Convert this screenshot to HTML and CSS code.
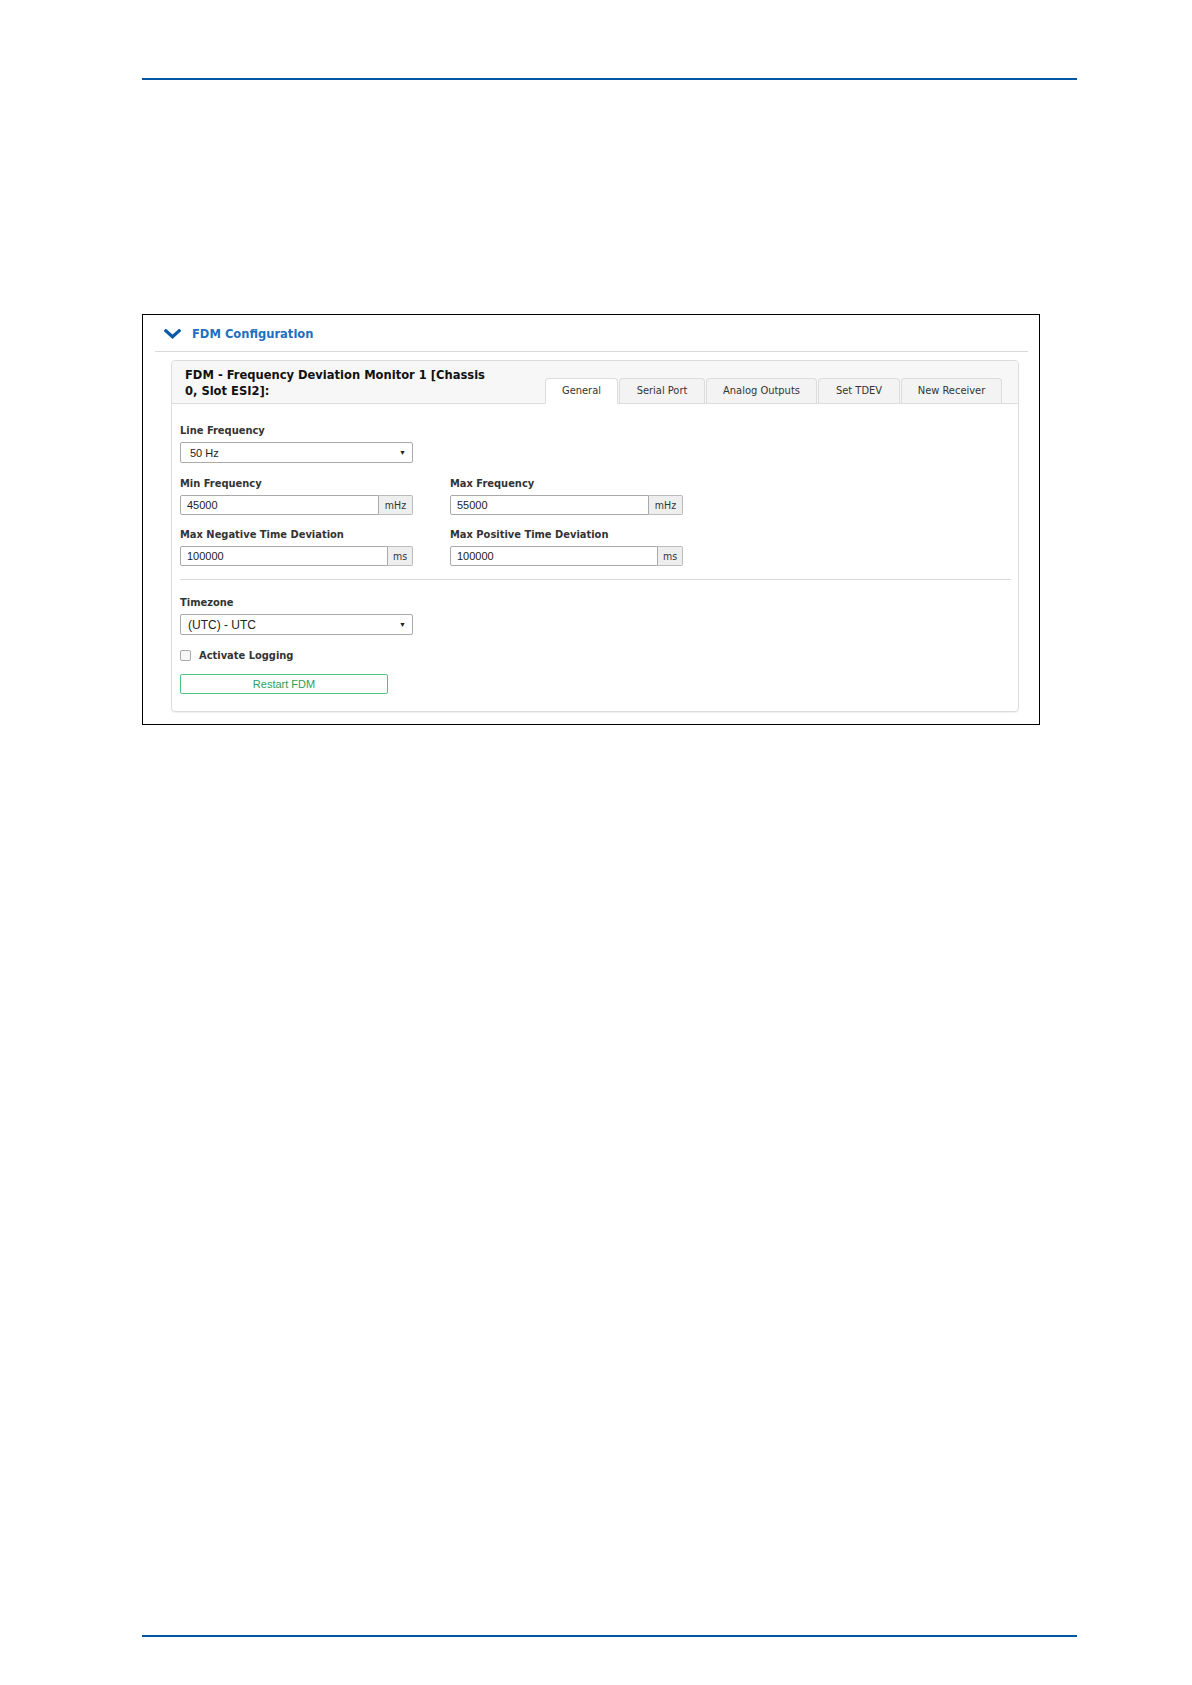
FILE: index.html
```html
<!DOCTYPE html>
<html>
<head>
<meta charset="utf-8">
<link rel="stylesheet" href="styles.css">
</head>
<body>
<div class="page">
  <div class="rule rule-top"></div>
  <div class="box">
    <div class="box-title">
      <svg class="chev" width="17" height="10" viewBox="0 0 17 10"><path d="M1.8 1.8 L8.5 7.8 L15.2 1.8" fill="none" stroke="#0d5aa7" stroke-width="3.2" stroke-linecap="square"/></svg>
      <span class="title-text">FDM Configuration</span>
    </div>
    <div class="divider"></div>
    <div class="panel">
      <div class="panel-head">
        <div class="panel-name">FDM - Frequency Deviation Monitor 1 [Chassis<br>0, Slot ESI2]:</div>
        <div class="tabs">
          <div class="tab tab-active t1">General</div>
          <div class="tab t2">Serial Port</div>
          <div class="tab t3">Analog Outputs</div>
          <div class="tab t4">Set TDEV</div>
          <div class="tab t5">New Receiver</div>
        </div>
      </div>
      <div class="panel-body">
        <div class="row">
          <div class="field">
            <div class="label">Line Frequency</div>
            <div class="select"><span>50 Hz</span><span class="arrow">▼</span></div>
          </div>
        </div>
        <div class="row row-tight">
          <div class="field">
            <div class="label">Min Frequency</div>
            <div class="group"><div class="input">45000</div><div class="addon addon-mhz">mHz</div></div>
          </div>
          <div class="field">
            <div class="label">Max Frequency</div>
            <div class="group"><div class="input">55000</div><div class="addon addon-mhz">mHz</div></div>
          </div>
        </div>
        <div class="row row-tight">
          <div class="field">
            <div class="label">Max Negative Time Deviation</div>
            <div class="group"><div class="input">100000</div><div class="addon addon-ms">ms</div></div>
          </div>
          <div class="field">
            <div class="label">Max Positive Time Deviation</div>
            <div class="group"><div class="input">100000</div><div class="addon addon-ms">ms</div></div>
          </div>
        </div>
        <div class="sep"></div>
        <div class="row row-tz">
          <div class="field">
            <div class="label">Timezone</div>
            <div class="select select-tz"><span>(UTC) - UTC</span><span class="arrow">▼</span></div>
          </div>
        </div>
        <div class="check-row">
          <span class="checkbox"></span><span class="check-label">Activate Logging</span>
        </div>
        <div class="btn">Restart FDM</div>
      </div>
    </div>
  </div>
  <div class="rule rule-bottom"></div>
</div>
</body>
</html>
```

FILE: styles.css
```css
html, body {
  margin: 0;
  padding: 0;
  background: #fff;
}
.page {
  width: 935px;
  margin-left: 142px;
  padding-top: 78px;
}
.rule {
  height: 2px;
  background: #0055a5;
}
.rule-bottom {
  margin-top: 910px;
}
.box {
  margin-top: 234px;
  width: 896px;
  height: 409px;
  border: 1px solid #000;
}
.box-title {
  display: flex;
  align-items: center;
  height: 36px;
  padding-left: 21px;
}
.chev {
  display: block;
  margin-top: 1px;
}
.title-text {
  margin-left: 11px;
  font-family: "DejaVu Sans Condensed", "Noto Sans", sans-serif;
  font-weight: bold;
  font-size: 12.8px;
  color: #1f6fc0;
}
.divider {
  height: 1px;
  background: #d9d9d9;
  margin: 0 11px 0 12px;
}
.panel {
  margin: 8px 20px 0 28px;
  border: 1px solid #dcdcdc;
  border-radius: 4px;
  height: 350px;
  box-shadow: 0 1px 1px rgba(0,0,0,0.06);
}
.panel-head {
  display: flex;
  justify-content: space-between;
  align-items: flex-end;
  height: 42px;
  background: #f7f7f7;
  border-bottom: 1px solid #dddddd;
  border-radius: 4px 4px 0 0;
  padding: 0 16px 0 13px;
}
.panel-name {
  align-self: flex-start;
  margin-top: 6px;
  font-family: "DejaVu Sans Condensed", "Noto Sans", sans-serif;
  font-weight: bold;
  font-size: 12.8px;
  line-height: 16px;
  color: #111;
}
.tabs {
  display: flex;
  margin-bottom: -1px;
}
.tab {
  height: 26px;
  box-sizing: border-box;
  border: 1px solid #dcdcdc;
  border-bottom: 1px solid #dddddd;
  border-radius: 4px 4px 0 0;
  background: #f3f3f3;
  margin-left: 1px;
  display: flex;
  align-items: center;
  justify-content: center;
  padding-bottom: 2px;
  font-family: "DejaVu Sans Condensed", "Noto Sans", sans-serif;
  font-size: 11px;
  color: #333;
}
.tab-active {
  background: #fff;
  border-bottom-color: #fff;
}
.t1 { width: 73px; }
.t2 { width: 86px; }
.t3 { width: 111px; }
.t4 { width: 82px; }
.t5 { width: 101px; }
.panel-body {
  padding: 20px 7px 0 8px;
}
.row {
  display: flex;
  gap: 37px;
  margin-bottom: 14px;
}
.row-tight {
  margin-bottom: 13px;
}
.field {
  width: 233px;
}
.label {
  font-family: "DejaVu Sans Condensed", "Noto Sans", sans-serif;
  font-weight: bold;
  font-size: 11px;
  line-height: 14px;
  color: #333;
  margin-bottom: 4px;
}
.select {
  height: 21px;
  box-sizing: border-box;
  border: 1px solid #aaa;
  border-radius: 2px;
  background: #fff;
  display: flex;
  align-items: center;
  justify-content: space-between;
  padding: 0 6px 0 9px;
  font-family: "Liberation Sans", Arial, sans-serif;
  font-size: 11px;
  color: #222;
}
.select-tz {
  font-size: 12px;
  padding-left: 7px;
}
.arrow {
  font-size: 7px;
  color: #222;
}
.group {
  display: flex;
  height: 20px;
}
.input {
  flex: 1;
  box-sizing: border-box;
  border: 1px solid #aaa;
  border-radius: 2px 0 0 2px;
  display: flex;
  align-items: center;
  padding-left: 6px;
  font-family: "Liberation Sans", Arial, sans-serif;
  font-size: 11px;
  color: #222;
}
.addon {
  box-sizing: border-box;
  border: 1px solid #bbb;
  border-left: none;
  border-radius: 0 2px 2px 0;
  background: #eeeeee;
  display: flex;
  align-items: center;
  justify-content: center;
  font-family: "DejaVu Sans Condensed", "Noto Sans", sans-serif;
  font-size: 10.5px;
  color: #333;
}
.addon-mhz { width: 34px; }
.addon-ms { width: 25px; }
.sep {
  height: 1px;
  background: #d9d9d9;
  margin: 0 0 16px 0;
}
.row-tz {
  margin-bottom: 13px;
}
.check-row {
  display: flex;
  align-items: center;
  height: 14px;
}
.checkbox {
  width: 9px;
  height: 9px;
  border: 1px solid #aaa;
  border-radius: 2px;
  background: #f6f6f6;
}
.check-label {
  margin-left: 8px;
  font-family: "DejaVu Sans Condensed", "Noto Sans", sans-serif;
  font-weight: bold;
  font-size: 11px;
  color: #333;
}
.btn {
  margin-top: 12px;
  width: 208px;
  height: 20px;
  box-sizing: border-box;
  border: 1px solid #4cc27a;
  border-radius: 2px;
  display: flex;
  align-items: center;
  justify-content: center;
  font-family: "Liberation Sans", Arial, sans-serif;
  font-size: 11px;
  color: #2f9e55;
}
```
